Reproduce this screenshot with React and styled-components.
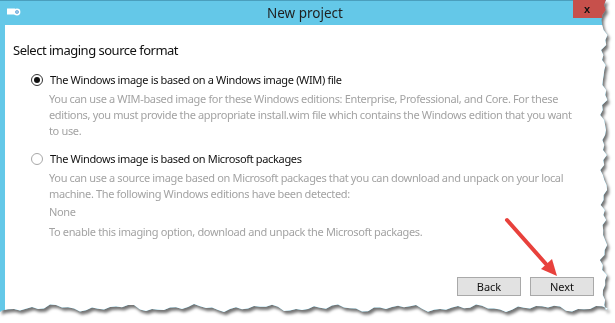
import React from 'react'
import styled, { createGlobalStyle } from 'styled-components'

const GlobalStyle = createGlobalStyle`
  html, body {
    margin: 0;
    padding: 0;
    background: #ffffff;
  }
  body {
    font-family: "Segoe UI", "Noto Sans", "Open Sans", sans-serif;
  }
`

// torn paper edge on the right and bottom of the screenshot
function tornEdge(width, height) {
  const wobble = (i, a, b, c) =>
    Math.sin(i * a) * 2 + Math.sin(i * b + 1.3) * 1.5 + Math.sin(i * c + 0.4) * 1
  const pts = ['0px 0px']
  for (let y = 0; y <= height; y += 5) {
    pts.push(`${(width - 4 + wobble(y, 0.21, 0.57, 1.13)).toFixed(1)}px ${y}px`)
  }
  for (let x = width; x >= 0; x -= 6) {
    pts.push(`${x}px ${(height - 4 + wobble(x, 0.09, 0.31, 0.87)).toFixed(1)}px`)
  }
  pts.push(`0px ${height}px`)
  return `polygon(${pts.join(', ')})`
}

const Page = styled.div`
  width: 615px;
  height: 323px;
  overflow: hidden;
`

const Shadow = styled.div`
  filter: drop-shadow(2px 3px 1.5px rgba(0, 0, 0, 0.55));
  width: 608px;
`

const Window = styled.div`
  width: 608px;
  height: 312px;
  display: flex;
  flex-direction: column;
  background: #64c8e8;
`

const TitleBar = styled.div`
  height: 25px;
  flex: none;
  display: flex;
  align-items: flex-start;
  border-top: 1px solid #4a9fbd;
  box-sizing: border-box;
`

const AppIcon = styled.svg`
  margin: 7px 0 0 7px;
`

const Title = styled.div`
  flex: 1;
  text-align: center;
  font-size: 13.5px;
  line-height: 24px;
  color: #1f1f1f;
  padding-left: 16px;
`

const CloseButton = styled.div`
  width: 34px;
  height: 18px;
  margin-top: -1px;
  margin-right: 1px;
  background: #c7504b;
  display: flex;
  align-items: center;
  justify-content: center;
  padding-right: 6px;
  box-sizing: border-box;
  font: bold 11px "Liberation Sans", sans-serif;
  color: #111;
`

const Body = styled.div`
  flex: 1;
  margin-left: 5px;
  background: #ffffff;
  padding: 15px 0 0 8px;
  position: relative;
  display: flex;
  flex-direction: column;
`

const Heading = styled.h1`
  margin: 0;
  font-weight: normal;
  font-size: 13px;
  letter-spacing: -0.5px;
  line-height: 20px;
  color: #111;
`

const Options = styled.div`
  padding: 12px 0 0 18px;
  display: flex;
  flex-direction: column;
  gap: 12px;
`

const Option = styled.div`
  display: flex;
  flex-direction: column;
`

const OptionRow = styled.label`
  display: flex;
  align-items: center;
  gap: 7px;
  font-size: 11px;
  letter-spacing: -0.35px;
  line-height: 16px;
  color: #111;
`

const Radio = styled.span`
  width: 10px;
  height: 10px;
  border-radius: 50%;
  border: 1px solid ${p => (p.checked ? '#333' : '#a8a8a8')};
  background: #fff;
  display: flex;
  align-items: center;
  justify-content: center;
  flex: none;

  &::after {
    content: '';
    width: 6px;
    height: 6px;
    border-radius: 50%;
    background: ${p => (p.checked ? '#111' : 'transparent')};
  }
`

const Desc = styled.p`
  margin: ${p => p.top || 3}px 0 0 18px;
  font-size: 11px;
  letter-spacing: -0.35px;
  line-height: 16px;
  color: #a3a3a3;
  white-space: nowrap;
`

const Footer = styled.div`
  margin-top: auto;
  display: flex;
  justify-content: flex-end;
  gap: 9px;
  padding: 0 14px 16px 0;
`

const Button = styled.button`
  width: 64px;
  height: 19px;
  padding: 0;
  border: 1px solid #a9a9a9;
  background: #e2e2e2;
  font-family: inherit;
  font-size: 11px;
  color: #111;
`

const Arrow = styled.svg`
  position: absolute;
  left: 499px;
  top: 192px;
  overflow: visible;
`

export default function App() {
  return (
    <Page>
      <GlobalStyle />
      <Shadow>
        <Window style={{ clipPath: tornEdge(608, 312) }}>
          <TitleBar>
            <AppIcon width="14" height="8" viewBox="0 0 14 8">
              <rect x="0" y="0.5" width="8" height="6" fill="#fff" />
              <circle cx="10" cy="4" r="3.4" fill="#fff" />
              <circle cx="10" cy="4" r="1.8" fill="#3b8fd0" />
              <circle cx="10" cy="4" r="0.8" fill="#fff" />
            </AppIcon>
            <Title>New project</Title>
            <CloseButton>x</CloseButton>
          </TitleBar>
          <Body>
            <Heading>Select imaging source format</Heading>
            <Options>
              <Option>
                <OptionRow>
                  <Radio checked />
                  The Windows image is based on a Windows image (WIM) file
                </OptionRow>
                <Desc>
                  You can use a WIM-based image for these Windows editions: Enterprise, Professional, and Core. For these
                  <br />
                  editions, you must provide the appropriate install.wim file which contains the Windows edition that you want
                  <br />
                  to use.
                </Desc>
              </Option>
              <Option>
                <OptionRow>
                  <Radio />
                  The Windows image is based on Microsoft packages
                </OptionRow>
                <Desc>
                  You can use a source image based on Microsoft packages that you can download and unpack on your local
                  <br />
                  machine. The following Windows editions have been detected:
                </Desc>
                <Desc top={2}>None</Desc>
                <Desc top={4}>To enable this imaging option, download and unpack the Microsoft packages.</Desc>
              </Option>
            </Options>
            <Footer>
              <Button>Back</Button>
              <Button>Next</Button>
            </Footer>
            <Arrow width="56" height="62" viewBox="0 0 56 62">
              <line x1="3" y1="3" x2="42" y2="47" stroke="#e8413c" strokeWidth="4" strokeLinecap="round" />
              <polygon points="53,59 37,52 48,42" fill="#e8413c" />
            </Arrow>
          </Body>
        </Window>
      </Shadow>
    </Page>
  )
}
